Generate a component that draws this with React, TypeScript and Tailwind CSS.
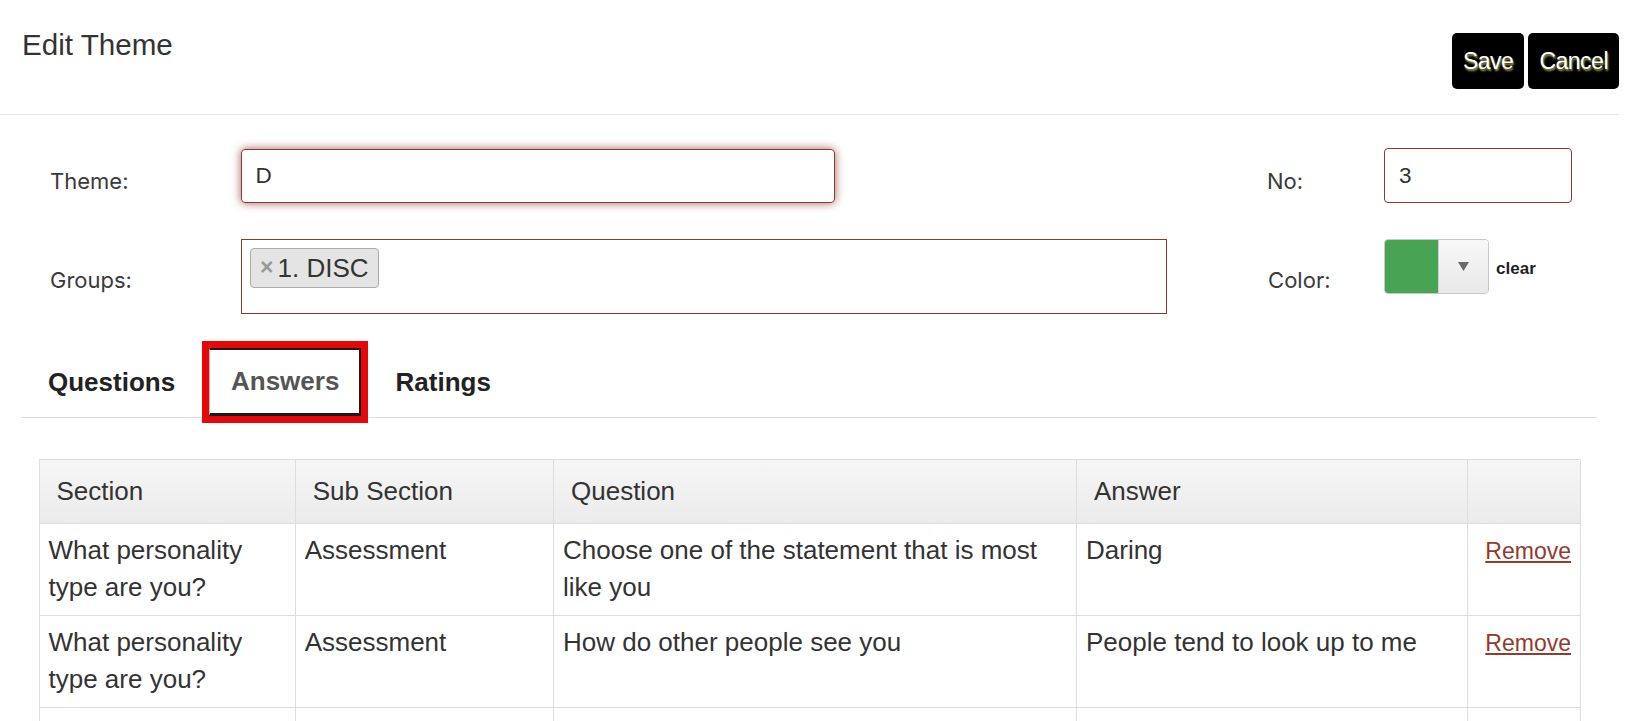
import React from "react";

const rows = [
  {
    section: "What personality type are you?",
    sub: "Assessment",
    question: "Choose one of the statement that is most like you",
    answer: "Daring",
  },
  {
    section: "What personality type are you?",
    sub: "Assessment",
    question: "How do other people see you",
    answer: "People tend to look up to me",
  },
];

function Header() {
  return (
    <div className="flex justify-between h-[115px] border-b border-[#e5e5e5]">
      <h1 className="pl-[22px] pt-[28px] text-[29.6px] leading-[34px] font-normal text-[#333]">
        Edit Theme
      </h1>
      {/* Save / Cancel */}
      <div className="flex gap-[4px] pt-[33px]">
        <button className="h-[56px] px-[11px] rounded-[5px] bg-black text-white text-[23px] tracking-[-0.5px] [text-shadow:1px_2px_2px_rgba(170,170,90,0.95)]">
          Save
        </button>
        <button className="h-[56px] px-[11px] rounded-[5px] bg-black text-white text-[23px] tracking-[-0.5px] [text-shadow:1px_2px_2px_rgba(170,170,90,0.95)]">
          Cancel
        </button>
      </div>
    </div>
  );
}

function Label({ children, className }: { children: React.ReactNode; className?: string }) {
  return (
    <div
      className={`font-['Inter',sans-serif] text-[22px] leading-[24px] text-[#3a3a3a] ${className ?? ""}`}
    >
      {children}
    </div>
  );
}

function Form() {
  return (
    <div className="pl-[50px]">
      {/* Theme / No */}
      <div className="flex items-start mt-[33px]">
        <Label className="w-[190.6px] mt-[21px]">Theme:</Label>
        <div className="w-[594.4px] h-[54px] mt-[1px] flex items-center pl-[14px] rounded-[4px] border border-[#8a3b2e] shadow-[0_0_10px_rgba(138,59,46,0.8)] text-[22.5px] text-[#333]">
          D
        </div>
        <Label className="ml-[432px] w-[117px] mt-[21px]">No:</Label>
        <div className="w-[188px] h-[55px] flex items-center pl-[14px] rounded-[4px] border border-[#8a3b2e] text-[22.5px] text-[#333]">
          3
        </div>
      </div>

      {/* Groups / Color */}
      <div className="flex items-start mt-[35.5px]">
        <Label className="w-[190.6px] mt-[29.5px]">Groups:</Label>
        <div className="w-[926px] h-[75px] border border-[#8a3b2e] pt-[8.5px] pl-[8.5px]">
          <span className="inline-flex items-center h-[39.5px] pl-[9px] pr-[9px] rounded-[4px] border border-[#aaa] bg-[#e4e4e4] text-[#333]">
            <span className="text-[23px] font-bold text-[#999] mr-[4px] leading-none">×</span>
            <span className="text-[26px] leading-none">1. DISC</span>
          </span>
        </div>
        <Label className="ml-[101.5px] w-[116px] mt-[29.5px]">Color:</Label>
        <div className="flex items-center">
          <div className="flex w-[105px] h-[55px] rounded-[4px] border border-[#c8c8c8] overflow-hidden">
            <div className="w-[53px] bg-[#48a354]" />
            <div className="flex-1 flex items-center justify-center border-l border-[#d0d0d0] bg-linear-to-b from-[#f8f8f8] to-[#e8e8e8]">
              <svg width="11" height="9" viewBox="0 0 11 9">
                <polygon points="0,0 11,0 5.5,9" fill="#6a6a6a" />
              </svg>
            </div>
          </div>
          <span className="ml-[7px] mt-[6px] text-[17px] font-bold text-[#222]">clear</span>
        </div>
      </div>
    </div>
  );
}

function Tabs() {
  return (
    <div className="mx-[21px] mt-[27px] w-[1576px] h-[77.6px] flex items-start border-b border-[#dddddd]">
      <div className="w-[181px] h-[76.6px] flex items-center pl-[27px] pt-[7px] text-[26px] font-bold text-[#222]">
        Questions
      </div>
      <div className="h-[82.5px] border-[7px] border-[#e60808]">
        <div className="w-[151.6px] h-[68.5px] flex items-center pl-[21px] border-t-[2.5px] border-b-[3px] border-r-[2px] border-l border-t-[#1a1a1a] border-b-[#1a1a1a] border-r-[#1a1a1a] border-l-[#bbbbbb] bg-white text-[26px] font-bold text-[#555]">
          Answers
        </div>
      </div>
      <div className="h-[76.6px] flex items-center pl-[28px] pt-[7px] text-[26px] font-bold text-[#222]">
        Ratings
      </div>
    </div>
  );
}

function AnswersTable() {
  return (
    <div className="ml-[38.5px] mt-[41px] w-[1541.5px]">
      <table className="w-full table-fixed border-collapse text-[26px] leading-[37.5px] text-[#333]">
        <colgroup>
          <col className="w-[256.2px]" />
          <col className="w-[258.3px]" />
          <col className="w-[523px]" />
          <col className="w-[391.5px]" />
          <col className="w-[112.5px]" />
        </colgroup>
        <thead>
          <tr className="bg-linear-to-b from-[#f6f6f6] to-[#ebebeb]">
            {["Section", "Sub Section", "Question", "Answer", ""].map((h, i) => (
              <th
                key={i}
                className="border border-[#dddddd] text-left font-normal pl-[17px] py-[12.5px]"
              >
                {h}
              </th>
            ))}
          </tr>
        </thead>
        <tbody>
          {rows.map((r, i) => (
            <tr key={i}>
              <td className="border border-[#dddddd] align-top pl-[9px] pr-[6px] py-[8px]">{r.section}</td>
              <td className="border border-[#dddddd] align-top pl-[9px] pr-[6px] py-[8px]">{r.sub}</td>
              <td className="border border-[#dddddd] align-top pl-[9px] pr-[6px] py-[8px]">{r.question}</td>
              <td className="border border-[#dddddd] align-top pl-[9px] pr-[6px] py-[8px]">{r.answer}</td>
              <td className="border border-[#dddddd] align-top text-right pr-[9px] py-[8px]">
                <a href="#" className="text-[23px] text-[#923a2c] underline">
                  Remove
                </a>
              </td>
            </tr>
          ))}
          {/* next row starts at the fold */}
          <tr className="h-[92px]">
            <td className="border border-[#dddddd]" />
            <td className="border border-[#dddddd]" />
            <td className="border border-[#dddddd]" />
            <td className="border border-[#dddddd]" />
            <td className="border border-[#dddddd]" />
          </tr>
        </tbody>
      </table>
    </div>
  );
}

export default function App() {
  return (
    <div className="w-[1619px] bg-white font-['Liberation_Sans',Arial,sans-serif] text-[#333]">
      <Header />
      <Form />
      <Tabs />
      <AnswersTable />
    </div>
  );
}
